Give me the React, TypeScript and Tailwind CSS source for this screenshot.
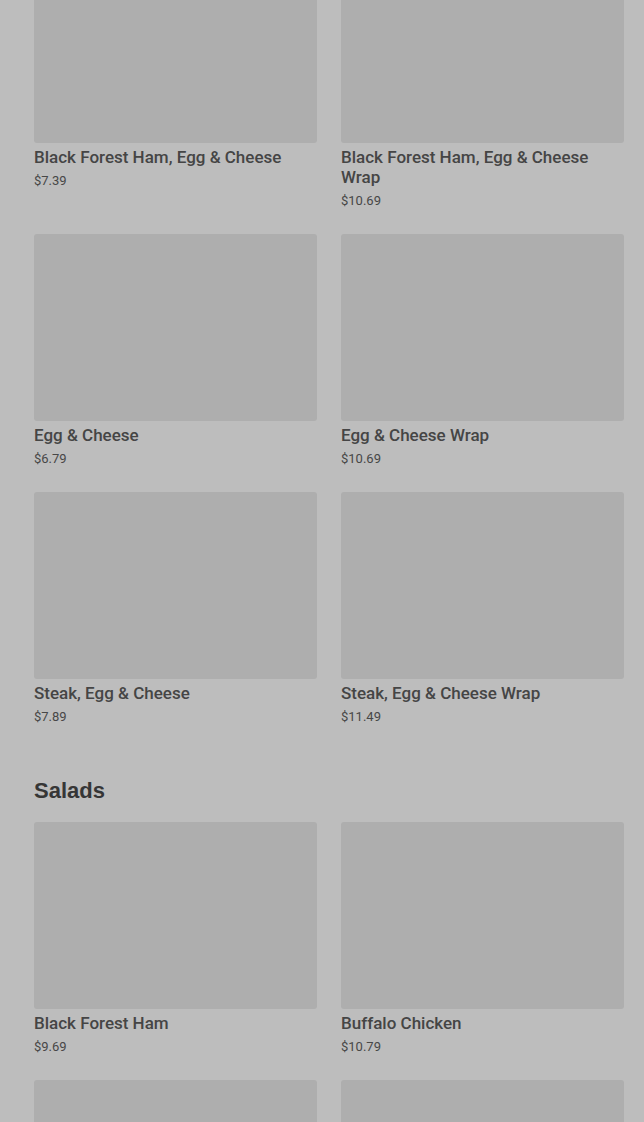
type Item = { name: string; price: string };

const breakfast: Item[] = [
  { name: "Black Forest Ham, Egg & Cheese", price: "$7.39" },
  { name: "Black Forest Ham, Egg & Cheese Wrap", price: "$10.69" },
  { name: "Egg & Cheese", price: "$6.79" },
  { name: "Egg & Cheese Wrap", price: "$10.69" },
  { name: "Steak, Egg & Cheese", price: "$7.89" },
  { name: "Steak, Egg & Cheese Wrap", price: "$11.49" },
];

const salads: Item[] = [
  { name: "Black Forest Ham", price: "$9.69" },
  { name: "Buffalo Chicken", price: "$10.79" },
  { name: "Chicken & Bacon Ranch", price: "$11.29" },
  { name: "Oven Roasted Turkey", price: "$10.29" },
];

function MenuCard({ item }: { item: Item }) {
  return (
    <div className="flex flex-col">
      <div className="h-[187px] w-full rounded-[3px] bg-[#aeaeae]" />
      <div className="mt-1 text-[17px] leading-5 font-medium text-[#454545] font-['Roboto',sans-serif]">
        {item.name}
      </div>
      <div className="mt-[5px] text-[13px] leading-[18px] text-[#474747] font-['Roboto',sans-serif]">
        {item.price}
      </div>
    </div>
  );
}

export default function App() {
  return (
    <main className="h-[1122px] w-full overflow-hidden bg-[#bdbdbd]">
      <div className="-mt-[44px] pl-[34px] pr-5">
        <div className="grid grid-cols-2 gap-x-6 gap-y-6">
          {breakfast.map((item) => (
            <MenuCard key={item.name} item={item} />
          ))}
        </div>

        {/* Salads */}
        <h2 className="mt-[51px] mb-[17px] text-[22px] leading-7 font-bold text-[#363636] font-['Liberation_Sans',Arial,sans-serif]">
          Salads
        </h2>
        <div className="grid grid-cols-2 gap-x-6 gap-y-6">
          {salads.map((item) => (
            <MenuCard key={item.name} item={item} />
          ))}
        </div>
      </div>
    </main>
  );
}
